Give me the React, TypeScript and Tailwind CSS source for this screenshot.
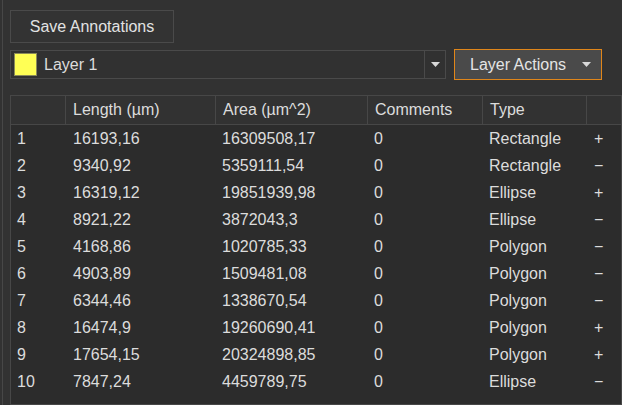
const rows: [string, string, string, string, string, string][] = [
  ["1", "16193,16", "16309508,17", "0", "Rectangle", "+"],
  ["2", "9340,92", "5359111,54", "0", "Rectangle", "−"],
  ["3", "16319,12", "19851939,98", "0", "Ellipse", "+"],
  ["4", "8921,22", "3872043,3", "0", "Ellipse", "−"],
  ["5", "4168,86", "1020785,33", "0", "Polygon", "−"],
  ["6", "4903,89", "1509481,08", "0", "Polygon", "−"],
  ["7", "6344,46", "1338670,54", "0", "Polygon", "−"],
  ["8", "16474,9", "19260690,41", "0", "Polygon", "+"],
  ["9", "17654,15", "20324898,85", "0", "Polygon", "+"],
  ["10", "7847,24", "4459789,75", "0", "Ellipse", "−"],
];

const headers = ["", "Length (µm)", "Area (µm^2)", "Comments", "Type", ""];

function Arrow() {
  return (
    <svg width="9" height="5" viewBox="0 0 9 5" className="block">
      <path d="M0 0h9L4.5 5z" fill="#d8d8d8" />
    </svg>
  );
}

export default function App() {
  return (
    <div className="w-[622px] h-[405px] overflow-hidden bg-[#323232] pl-[2px] font-['Liberation_Sans',Arial,sans-serif] text-[16px] text-[#dcdcdc]">
      <div className="h-full border-l border-[#474747] pl-[7px] pt-[10px] flex flex-col">
        <button className="w-[164px] h-[33px] border border-[#4a4a4a] bg-[#333333] text-[#e2e2e2] flex items-center justify-center">
          Save Annotations
        </button>

        <div className="mt-[6px] flex items-center gap-[8px]">
          <div className="w-[436px] h-[29px] border border-[#4a4a4a] bg-[#313131] flex items-center">
            <div className="ml-[3px] w-[23px] h-[23px] bg-[#ffff55] border border-[#8a8a5a]" />
            <span className="ml-[7px] flex-1">Layer 1</span>
            <div className="h-full w-[21px] border-l border-[#4a4a4a] flex items-center justify-center">
              <Arrow />
            </div>
          </div>
          <div className="w-[148px] h-[31px] border border-[#e0861a] bg-[#4a4a4a] flex items-center pl-[15px] pr-[10px]">
            <span className="flex-1 text-[#e4e4e4]">Layer Actions</span>
            <Arrow />
          </div>
        </div>

        <div className="mt-[15px] w-[612px] flex-1 border border-[#474747] bg-[#2c2c2c]">
          <div className="grid grid-cols-[55px_150px_152px_115px_104px_1fr] h-[29px] bg-[#323232] border-b border-[#474747]">
            {headers.map((h, i) => (
              <div
                key={i}
                className={
                  "flex items-center pl-[7px] " + (i < 5 ? "border-r border-[#474747]" : "")
                }
              >
                {h}
              </div>
            ))}
          </div>
          {rows.map((r) => (
            <div key={r[0]} className="grid grid-cols-[55px_150px_152px_115px_104px_1fr] h-[27px] items-center">
              <div className="pl-[6px]">{r[0]}</div>
              <div className="pl-[7px]">{r[1]}</div>
              <div className="pl-[6px]">{r[2]}</div>
              <div className="pl-[6px]">{r[3]}</div>
              <div className="pl-[6px]">{r[4]}</div>
              <div className="pl-[7px]">{r[5]}</div>
            </div>
          ))}
        </div>
      </div>
    </div>
  );
}
